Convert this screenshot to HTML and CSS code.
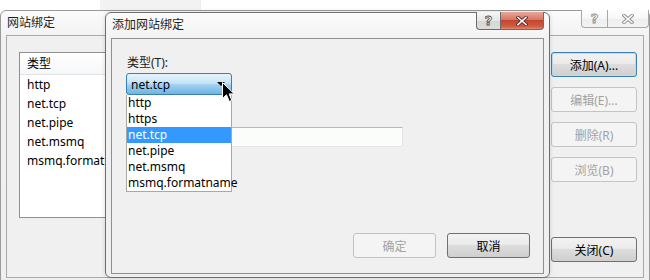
FILE: index.html
```html
<!DOCTYPE html>
<html>

<head>
    <meta charset="utf-8">
    <title>网站绑定</title>
    <link rel="stylesheet" href="styles.css">
</head>

<body>
    <div class="desktop">
        <div class="window main-window">
            <div class="titlebar">
                <span class="title">网站绑定</span>
                <div class="caption-buttons inactive">
                    <span class="cap-btn cap-help">?</span>
                    <span class="cap-btn cap-close">
                        <svg width="12" height="10" viewBox="0 0 12 10">
                            <path d="M2 1.5 L10 8.5 M10 1.5 L2 8.5" stroke="#8a8a8a" stroke-width="3.4" stroke-linecap="square" fill="none"/>
                            <path d="M2 1.5 L10 8.5 M10 1.5 L2 8.5" stroke="#fbfbfb" stroke-width="1.6" stroke-linecap="square" fill="none"/>
                        </svg>
                    </span>
                </div>
            </div>
            <div class="client main-client">
                <div class="listview">
                    <div class="lv-header">类型</div>
                    <div class="lv-row">http</div>
                    <div class="lv-row">net.tcp</div>
                    <div class="lv-row">net.pipe</div>
                    <div class="lv-row">net.msmq</div>
                    <div class="lv-row">msmq.formatname</div>
                </div>
                <div class="side-buttons">
                    <button class="btn btn-default">添加(A)...</button>
                    <button class="btn" disabled>编辑(E)...</button>
                    <button class="btn" disabled>删除(R)</button>
                    <button class="btn" disabled>浏览(B)</button>
                    <button class="btn btn-close">关闭(C)</button>
                </div>
            </div>
        </div>

        <div class="window dialog">
            <div class="titlebar">
                <span class="title">添加网站绑定</span>
                <div class="caption-buttons">
                    <span class="cap-btn cap-help">?</span>
                    <span class="cap-btn cap-close">
                        <svg width="12" height="10" viewBox="0 0 12 10">
                            <path d="M2 1.5 L10 8.5 M10 1.5 L2 8.5" stroke="#5a2a22" stroke-width="3.4" stroke-linecap="square" fill="none"/>
                            <path d="M2 1.5 L10 8.5 M10 1.5 L2 8.5" stroke="#ffffff" stroke-width="1.6" stroke-linecap="square" fill="none"/>
                        </svg>
                    </span>
                </div>
            </div>
            <div class="client dialog-client">
                <label class="field-label">类型(T):</label>
                <div class="combo">
                    <span class="combo-value">net.tcp</span>
                    <span class="combo-arrow"></span>
                </div>
                <div class="textbox"></div>

                <div class="dialog-buttons">
                    <button class="btn" disabled>确定</button>
                    <button class="btn btn-cancel">取消</button>
                </div>

                <!-- open dropdown of the combo box -->
                <div class="dropdown">
                    <div class="dd-item">http</div>
                    <div class="dd-item">https</div>
                    <div class="dd-item selected">net.tcp</div>
                    <div class="dd-item">net.pipe</div>
                    <div class="dd-item">net.msmq</div>
                    <div class="dd-item">msmq.formatname</div>
                </div>

                <svg class="cursor" width="13" height="21" viewBox="0 0 13 21">
                    <path d="M0.5 0.5 L0.5 16.5 L4.5 12.8 L7.3 19.5 L9.8 18.4 L7.1 11.9 L12.3 11.9 Z" fill="#000" stroke="#fff" stroke-width="1" stroke-linejoin="miter"/>
                </svg>
            </div>
        </div>
    </div>
</body>

</html>
```

FILE: styles.css
```css
* {
    box-sizing: border-box;
    margin: 0;
    padding: 0;
}

body {
    font-family: "Noto Sans", "Noto Sans CJK SC", sans-serif;
    font-size: 12px;
    color: #000;
    background: #ffffff;
    overflow: hidden;
}

.desktop {
    position: relative;
    width: 650px;
    height: 280px;
    overflow: hidden;
    background: linear-gradient(90deg, #ffffff 0, #ffffff 100px, #f2f2f2 100px, #f2f2f2 200px, #dcdcdc 200px, #ffffff 201px);
}

/* windows on the desktop */
.window {
    position: absolute;
    display: flex;
    flex-direction: column;
    border: 1px solid #6e6e6e;
    border-radius: 6px 6px 0 0;
    background: linear-gradient(#fbfbfb, #f1f1f1 30px, #efefef);
}

.main-window {
    left: 0;
    top: 10px;
    width: 650px;
    height: 290px;
    padding: 0 5px;
    border-color: #9a9a9a;
}

.dialog {
    left: 105px;
    top: 12px;
    width: 445px;
    height: 266px;
    padding: 0 5px 3px 5px;
    border-radius: 6px;
    box-shadow: 0 0 4px rgba(0, 0, 0, 0.15);
}

.titlebar {
    display: flex;
    align-items: flex-start;
    height: 24px;
    flex-shrink: 0;
}

.dialog .titlebar {
    height: 25px;
}

.title {
    line-height: 24px;
    padding-left: 1px;
    color: #1e1e1e;
}

.caption-buttons {
    display: flex;
    margin-left: auto;
    margin-top: -1px;
}

.main-window .caption-buttons {
    margin-right: -5px;
}

.cap-btn {
    display: flex;
    align-items: center;
    justify-content: center;
    height: 18px;
    border: 1px solid #6b6b6b;
    border-top: none;
    background: linear-gradient(#f6f6f6, #e6e6e6 50%, #d6d6d6 51%, #dcdcdc);
}

.cap-help {
    width: 25px;
    border-radius: 0 0 0 4px;
    font-family: "DejaVu Sans", sans-serif;
    font-weight: bold;
    font-size: 13px;
    color: #fdfdfd;
    -webkit-text-stroke: 0.8px #4a4a4a;
    line-height: 1;
}

.cap-close {
    width: 43px;
    border-left: none;
    border-radius: 0 0 4px 0;
    background: linear-gradient(#e9a99a, #d47766 45%, #c4452f 50%, #d15c44 85%, #df8a72);
}

.inactive .cap-btn {
    border-color: #a8a8a8;
    background: linear-gradient(#ffffff, #f6f6f6 50%, #eeeeee 51%, #f3f3f3);
}

.inactive .cap-help {
    width: 27px;
    -webkit-text-stroke: 0.8px #8a8a8a;
}

.inactive .cap-close {
    width: 41px;
}

/* client areas */
.client {
    background: #f0f0f0;
    border: 1px solid #8f8f8f;
}

.main-client {
    display: flex;
    gap: 10px;
    height: 243px;
    padding: 16px 6px 15px 12px;
    border-color: #a9a9a9;
}

.listview {
    flex: 1;
    height: 166px;
    background: #ffffff;
    border: 1px solid #8e8f8f;
}

.lv-header {
    height: 22px;
    line-height: 21px;
    padding-left: 7px;
    background: linear-gradient(#ffffff, #f6f7f9);
    border-bottom: 1px solid #e2e3e5;
}

.lv-row {
    height: 19px;
    line-height: 19px;
    padding-left: 7px;
}

.side-buttons {
    display: flex;
    flex-direction: column;
    gap: 10px;
    width: 86px;
}

.btn {
    height: 25px;
    font-family: inherit;
    font-size: 12px;
    color: #000;
    border: 1px solid #707070;
    border-radius: 3px;
    background: linear-gradient(#f2f2f2, #ebebeb 45%, #dddddd 50%, #cfcfcf);
}

.btn-default {
    border-color: #3c7fb1;
    box-shadow: inset 0 0 0 1px #b9dcf3;
}

.btn:disabled {
    color: #a3a3a3;
    border-color: #c2c5c8;
    background: #f4f4f4;
}

.btn-close {
    margin-top: auto;
}

.dialog-client {
    position: relative;
    display: flex;
    flex-direction: column;
    flex: 1;
    padding: 16px 13px 15px 14px;
}

.field-label {
    line-height: 16px;
    padding-left: 1px;
    margin-bottom: 2px;
    color: #1a1a1a;
}

.combo {
    display: flex;
    align-items: center;
    width: 106px;
    height: 22px;
    padding: 0 6px 0 4px;
    border: 1px solid #3c7fb1;
    border-radius: 3px;
    background: linear-gradient(#e5f3fc, #c6e4f7 45%, #9fd0f0 55%, #6db4e4);
}

.combo-arrow {
    margin-left: auto;
    width: 0;
    height: 0;
    border-left: 4px solid transparent;
    border-right: 4px solid transparent;
    border-top: 4px solid #000;
}

.textbox {
    width: 277px;
    height: 20px;
    margin-top: 32px;
    background: #fbfdfb;
    border: 1px solid #e2e6e9;
    border-top-color: #b5b8bb;
}

.dialog-buttons {
    display: flex;
    justify-content: flex-end;
    gap: 11px;
    margin-top: auto;
}

.dialog-buttons .btn {
    width: 83px;
}

.dialog-buttons .btn:disabled {
    border-color: #bfc3c6;
}

.dropdown {
    position: absolute;
    left: 14px;
    top: 56px;
    width: 106px;
    background: #ffffff;
    border: 1px solid #a8a8a8;
    border-top: none;
}

.dd-item {
    height: 16px;
    line-height: 16px;
    padding-left: 1px;
}

.dd-item.selected {
    background: #3399ff;
    color: #ffffff;
}

.cursor {
    position: absolute;
    left: 110px;
    top: 43px;
}
```
